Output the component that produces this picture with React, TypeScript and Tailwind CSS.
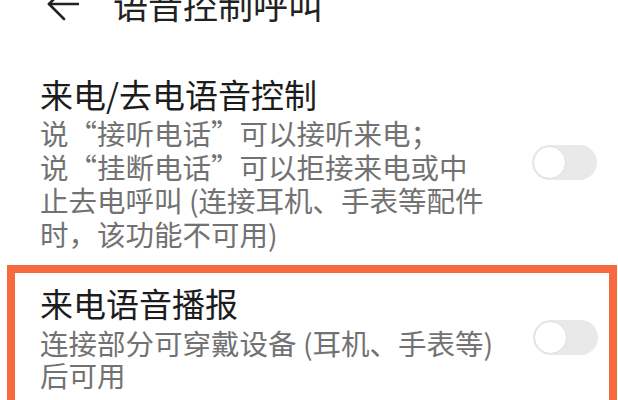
import React from 'react';

const cjk = { fontFamily: '"Noto Sans CJK SC", "Noto Sans", sans-serif' };

function Toggle() {
  return (
    <div className="relative h-[35px] w-[65px] shrink-0 rounded-full bg-[#e9e9e9]">
      <div className="absolute left-[1px] top-[1px] h-[33px] w-[33px] rounded-full border border-[#dedede] bg-white" />
    </div>
  );
}

function Q({ children }: { children: React.ReactNode }) {
  return <span className="[font-feature-settings:'fwid']">{children}</span>;
}

export default function App() {
  return (
    <div lang="zh-CN" className="h-[400px] w-[618px] overflow-hidden bg-white" style={cjk}>
      {/* header */}
      <div className="-mt-[14px] flex items-center pl-[47px]">
        <svg width="32" height="36" viewBox="0 0 32 36" fill="none" stroke="#222" strokeWidth="2.6" strokeLinecap="round" strokeLinejoin="round">
          <path d="M31 18H2" />
          <path d="M17 3L2 18l15 15" />
        </svg>
        <div className="ml-[34px] text-[35px] leading-[36px] text-[#222]">语音控制呼叫</div>
      </div>

      {/* section 1 */}
      <div className="mt-[52px] flex items-center pl-[40px] pr-[21px]">
        <div className="flex-1">
          <div className="text-[33px] leading-[40px] text-[#1c1c1c]">来电/去电语音控制</div>
          <div className="mt-[2px] whitespace-nowrap text-[28.5px] leading-[33.5px] text-[#727272]">
            <div>说<Q>“</Q>接听电话<Q>”</Q>可以接听来电；</div>
            <div>说<Q>“</Q>挂断电话<Q>”</Q>可以拒接来电或中</div>
            <div>止去电呼叫 (连接耳机、手表等配件</div>
            <div>时，该功能不可用)</div>
          </div>
        </div>
        <Toggle />
      </div>

      {/* section 2 */}
      <div className="ml-[7px] mr-[1px] mt-[15px] border-[8px] border-[#f56a3e] pb-[20px] pl-[25px] pr-[11px] pt-[10px]">
        <div className="flex items-center">
          <div className="flex-1">
            <div className="text-[33px] leading-[40px] text-[#1c1c1c]">来电语音播报</div>
            <div className="mt-[4px] whitespace-nowrap text-[28.5px] leading-[32px] text-[#727272]">
              <div>连接部分可穿戴设备 (耳机、手表等)</div>
              <div>后可用</div>
            </div>
          </div>
          <Toggle />
        </div>
      </div>
    </div>
  );
}
